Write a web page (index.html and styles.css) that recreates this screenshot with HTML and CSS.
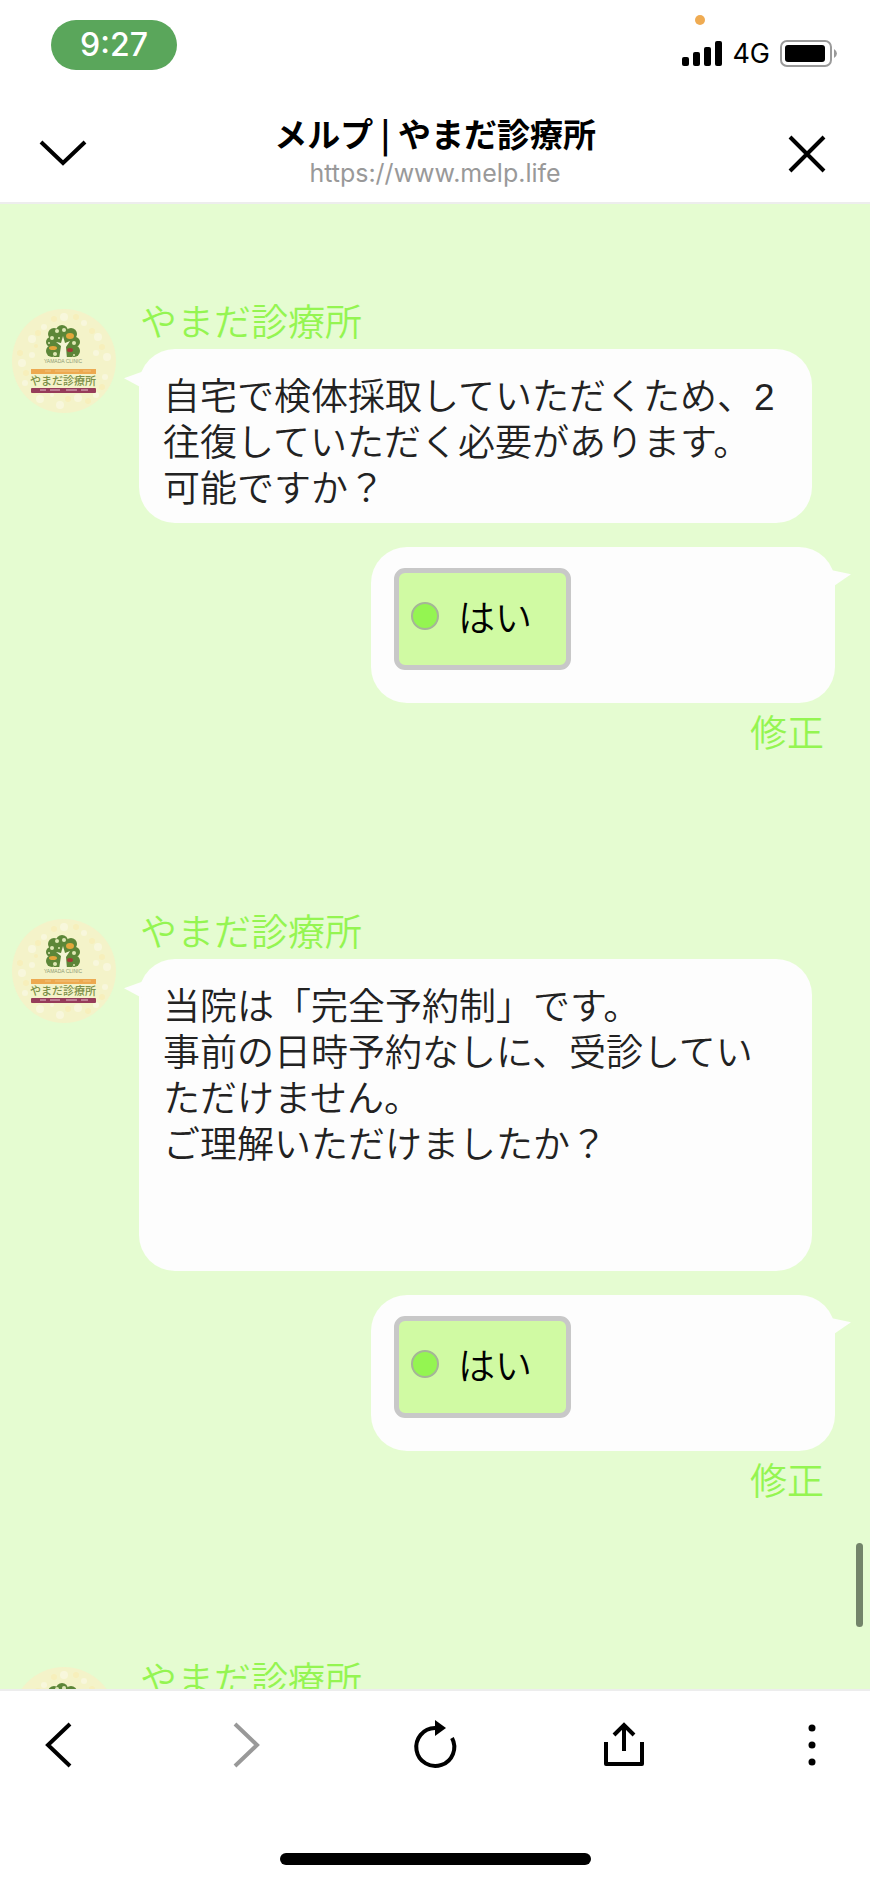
FILE: index.html
```html
<!DOCTYPE html>
<html lang="ja">
<head>
  <meta charset="UTF-8">
  <meta name="viewport" content="width=device-width, initial-scale=1">
  <title>メルプ | やまだ診療所</title>
  <link rel="stylesheet" href="styles.css">
</head>
<body>
  <!-- Clinic logo, shared by every message -->
  <svg class="sprite" aria-hidden="true">
    <symbol id="clinic-logo" viewBox="0 0 104 104">
      <circle cx="52" cy="52" r="52" fill="#f4f3c9"/>
      <g fill="#f8f7dc">
        <circle cx="20" cy="30" r="4"/><circle cx="32" cy="18" r="3"/><circle cx="52" cy="8" r="4"/><circle cx="72" cy="14" r="3"/>
        <circle cx="86" cy="28" r="4"/><circle cx="95" cy="48" r="4"/><circle cx="10" cy="54" r="4"/><circle cx="20" cy="46" r="3"/>
        <circle cx="84" cy="44" r="3"/><circle cx="13" cy="74" r="3"/><circle cx="28" cy="90" r="4"/><circle cx="48" cy="96" r="4"/>
        <circle cx="66" cy="89" r="4"/><circle cx="84" cy="86" r="3"/><circle cx="93" cy="68" r="3"/><circle cx="40" cy="86" r="2"/>
      </g>
      <g fill="#f7efbb">
        <circle cx="26" cy="24" r="3"/><circle cx="42" cy="10" r="3"/><circle cx="64" cy="8" r="3"/><circle cx="80" cy="22" r="3"/>
        <circle cx="90" cy="38" r="3"/><circle cx="8" cy="44" r="3"/><circle cx="14" cy="64" r="3"/><circle cx="22" cy="82" r="3"/>
        <circle cx="56" cy="90" r="3"/><circle cx="76" cy="92" r="3"/><circle cx="90" cy="78" r="3"/><circle cx="24" cy="37" r="2"/>
      </g>
      <g fill="#5c8638">
        <circle cx="50" cy="22" r="6"/><circle cx="42" cy="25" r="6"/><circle cx="59" cy="25" r="6"/><circle cx="39" cy="33" r="5"/>
        <circle cx="63" cy="33" r="5"/><circle cx="40" cy="42" r="6"/><circle cx="62" cy="42" r="6"/><circle cx="51" cy="30" r="6"/>
        <rect x="42" y="30" width="18" height="18"/>
      </g>
      <path d="M47 50 L49 37 L44 33 L49 34 L51 27 L53 34 L58 32 L54 38 L55 50 Z" fill="#f3f4d6"/>
      <g fill="#dfe8b6">
        <circle cx="45" cy="22" r="2"/><circle cx="52" cy="21" r="2"/><circle cx="40" cy="29" r="2"/><circle cx="62" cy="34" r="2"/>
        <circle cx="37" cy="34" r="1"/><circle cx="43" cy="45" r="2"/><circle cx="62" cy="46" r="1"/><circle cx="47" cy="29" r="1"/>
      </g>
      <ellipse cx="58" cy="27" rx="4" ry="3" fill="#e2a73c"/>
      <ellipse cx="41" cy="39" rx="4" ry="2" fill="#e2a73c"/>
      <ellipse cx="58" cy="41" rx="3" ry="2" fill="#a33a35"/>
      <text class="logo-sub" x="51" y="54" text-anchor="middle">YAMADA CLINIC</text>
      <rect x="19" y="60" width="65" height="5" fill="#eda950"/>
      <path d="M33 62 h6 M43 62 h24 M71 62 h8" stroke="#f2c47c" stroke-width="1"/>
      <text class="logo-name" x="51" y="76" text-anchor="middle">やまだ診療所</text>
      <rect x="19" y="79" width="65" height="5" rx="1" fill="#963c5a"/>
      <path d="M28 81 h6 M38 81 h10 M54 81 h11 M69 81 h7" stroke="#bd7d92" stroke-width="2"/>
    </symbol>
  </svg>

  <div class="app">
    <!-- Status bar -->
    <div class="status-bar">
      <span class="clock">9:27</span>
      <span class="mic-dot"></span>
      <div class="status-icons">
        <svg width="40" height="26" viewBox="0 0 40 26" aria-hidden="true">
          <rect x="0" y="16" width="7" height="9" rx="2"/>
          <rect x="11" y="11" width="7" height="14" rx="2"/>
          <rect x="22" y="6" width="7" height="19" rx="2"/>
          <rect x="33" y="0" width="7" height="25" rx="2"/>
        </svg>
        <span class="network">4G</span>
        <svg width="58" height="28" viewBox="0 0 58 28" aria-hidden="true">
          <rect x="1" y="1" width="50" height="25" rx="6" fill="none" stroke="#9a9a9a" stroke-width="2"/>
          <rect x="5" y="5" width="40" height="17" rx="3"/>
          <path d="M54 9 Q57 11 57 13.500 Q57 16 54 18 Z" fill="#9a9a9a"/>
        </svg>
      </div>
    </div>

    <!-- Browser header -->
    <header class="nav-bar">
      <button type="button" class="icon-btn" aria-label="最小化">
        <svg width="48" height="48" viewBox="0 0 48 48" class="icon"><path d="M2 14 L24 35 L46 14"/></svg>
      </button>
      <div class="page-info">
        <h1 class="page-title">メルプ | やまだ診療所</h1>
        <p class="page-url">https://www.melp.life</p>
      </div>
      <button type="button" class="icon-btn" aria-label="閉じる">
        <svg width="48" height="48" viewBox="0 0 48 48" class="icon"><path d="M7 9 L41 43 M41 9 L7 43"/></svg>
      </button>
    </header>

    <!-- Chat -->
    <main class="chat">
      <div class="chat-log">
        <section class="exchange">
          <div class="message">
            <svg class="avatar" role="img" aria-label="やまだ診療所"><use href="#clinic-logo"/></svg>
            <div class="message-body">
              <p class="sender">やまだ診療所</p>
              <p class="bubble bubble-left">自宅で検体採取していただくため、2往復していただく必要があります。<br>可能ですか？</p>
            </div>
          </div>
          <div class="reply">
            <div class="bubble-right">
              <label class="option"><input type="radio" name="visit" checked><span>はい</span></label>
            </div>
            <a href="#" class="edit">修正</a>
          </div>
        </section>

        <section class="exchange">
          <div class="message">
            <svg class="avatar" role="img" aria-label="やまだ診療所"><use href="#clinic-logo"/></svg>
            <div class="message-body">
              <p class="sender">やまだ診療所</p>
              <p class="bubble bubble-left">当院は「完全予約制」です。<br>事前の日時予約なしに、受診していただけません。<br>ご理解いただけましたか？<br><br><br></p>
            </div>
          </div>
          <div class="reply">
            <div class="bubble-right">
              <label class="option"><input type="radio" name="reservation" checked><span>はい</span></label>
            </div>
            <a href="#" class="edit">修正</a>
          </div>
        </section>

        <section class="exchange">
          <div class="message">
            <svg class="avatar" role="img" aria-label="やまだ診療所"><use href="#clinic-logo"/></svg>
            <div class="message-body">
              <p class="sender">やまだ診療所</p>
            </div>
          </div>
        </section>
      </div>
      <span class="scroll-thumb"></span>
    </main>

    <!-- Toolbar -->
    <footer class="bottom-bar">
      <nav class="toolbar">
        <button type="button" class="icon-btn" aria-label="戻る">
          <svg width="48" height="48" viewBox="0 0 48 48" class="icon"><path d="M36 3 L14 24 L36 45"/></svg>
        </button>
        <button type="button" class="icon-btn" aria-label="進む" disabled>
          <svg width="48" height="48" viewBox="0 0 48 48" class="icon"><path d="M12 3 L34 24 L12 45"/></svg>
        </button>
        <button type="button" class="icon-btn" aria-label="再読み込み">
          <svg width="48" height="48" viewBox="0 0 48 48" class="icon"><path d="M26 7 H24 A19 19 0 1 0 41 17"/><path class="solid" d="M24 -1 L35 7 L24 15 Z"/></svg>
        </button>
        <button type="button" class="icon-btn" aria-label="共有">
          <svg width="48" height="48" viewBox="0 0 48 48" class="icon"><path d="M6 21 V43 H42 V21" stroke-linejoin="round"/><path d="M24 30 V4 M14 14 L24 4 L34 14"/></svg>
        </button>
        <button type="button" class="icon-btn" aria-label="メニュー">
          <svg width="48" height="48" viewBox="0 0 48 48" class="icon"><g class="solid"><circle cx="24" cy="7" r="3.500"/><circle cx="24" cy="24" r="3.500"/><circle cx="24" cy="41" r="3.500"/></g></svg>
        </button>
      </nav>
      <div class="home-indicator"></div>
    </footer>
  </div>
</body>
</html>
```
FILE: styles.css
```css
* { box-sizing: border-box; }

body {
  margin: 0;
  font-family: "Liberation Sans", "Noto Sans CJK JP", sans-serif;
  background: #fff;
  color: #000;
}

h1, p { margin: 0; }

.sprite { display: none; }

.app {
  display: flex;
  flex-direction: column;
  height: 100vh;
}

/* Status bar */
.status-bar {
  position: relative;
  display: flex;
  justify-content: space-between;
  align-items: flex-start;
  height: 101px;
  padding: 20px 32px 0 51px;
  font-family: Inter, sans-serif;
}

.clock {
  width: 126px;
  line-height: 50px;
  border-radius: 25px;
  background: #5aa65b;
  color: #fff;
  font-size: 32px;
  font-weight: 500;
  text-align: center;
}

.mic-dot {
  position: absolute;
  top: 15px;
  right: 165px;
  width: 10px;
  height: 10px;
  border-radius: 50%;
  background: #efab52;
}

.status-icons {
  display: flex;
  align-items: center;
  gap: 10px;
  padding-top: 16px;
}

.network {
  font-size: 27px;
  line-height: 36px;
}

/* Browser header */
.nav-bar {
  display: flex;
  justify-content: space-between;
  height: 103px;
  padding: 0 33px;
  border-bottom: 2px solid #ededed;
}

.page-info { text-align: center; }

.page-title {
  font-family: "Noto Sans CJK JP", sans-serif;
  font-size: 33px;
  font-weight: 700;
  line-height: 48px;
  padding-top: 8px;
}

.page-url {
  font-family: Inter, sans-serif;
  font-size: 25px;
  line-height: 32px;
  color: #999;
}

.icon-btn {
  display: flex;
  justify-content: center;
  align-items: center;
  width: 60px;
  height: 102px;
  padding: 0;
  border: none;
  background: none;
  color: #000;
  cursor: pointer;
}

.icon-btn:disabled { color: #999; cursor: default; }

.icon {
  fill: none;
  stroke: currentColor;
  stroke-width: 4;
  overflow: visible;
}

.icon .solid { fill: currentColor; stroke: none; }

/* Chat */
.chat {
  position: relative;
  flex: 1;
  min-height: 0;
  background: #e5fcd1;
}

.chat-log {
  height: 100%;
  padding-top: 94px;
  overflow-y: auto;
  scrollbar-width: none;
}

.exchange { padding: 0 35px 150px 12px; }

.message {
  display: flex;
  gap: 23px;
  padding-right: 23px;
}

.avatar {
  flex: none;
  width: 104px;
  height: 104px;
  margin-top: 11px;
}

.logo-sub {
  font-family: "Liberation Sans", sans-serif;
  font-size: 5px;
  fill: #8d9a74;
}

.logo-name {
  font-family: "Noto Sans CJK JP", sans-serif;
  font-size: 11px;
  font-weight: 500;
  fill: #7c8f48;
}

.message-body { flex: 1; }

.sender {
  padding: 3px 0 2px 1px;
  font-size: 37px;
  font-weight: 350;
  line-height: 46px;
  color: #94f551;
}

.bubble {
  position: relative;
  padding: 26px 30px 10px 24px;
  border-radius: 36px;
  background: #fdfdfd;
  font-size: 37px;
  font-weight: 350;
  line-height: 46px;
  color: #222;
}

.bubble-left::before {
  content: "";
  position: absolute;
  top: 22px;
  left: -15px;
  width: 20px;
  height: 18px;
  background: #fdfdfd;
  clip-path: polygon(0 40%, 100% 0, 100% 100%);
}

.reply {
  display: flex;
  flex-direction: column;
  align-items: flex-end;
  padding-top: 24px;
}

.bubble-right {
  position: relative;
  width: 464px;
  max-width: 100%;
  padding: 21px 23px 33px;
  border-radius: 36px;
  background: #fdfdfd;
}

.bubble-right::after {
  content: "";
  position: absolute;
  top: 23px;
  right: -16px;
  width: 20px;
  height: 18px;
  background: #fdfdfd;
  clip-path: polygon(0 0, 100% 24%, 0 100%);
}

.option {
  display: inline-flex;
  align-items: center;
  gap: 19px;
  height: 102px;
  padding: 0 34px 6px 12px;
  border: 5px solid #c8c8c8;
  border-radius: 11px;
  background: #d0faa3;
  font-size: 37px;
  font-weight: 350;
  vertical-align: top;
  cursor: pointer;
}

.option input {
  appearance: none;
  width: 28px;
  height: 28px;
  margin: 0;
  border: 2px solid #a5b597;
  border-radius: 50%;
  background: #94f551;
}

.edit {
  margin: 9px 11px 0 0;
  font-size: 37px;
  font-weight: 350;
  line-height: 46px;
  color: #94f551;
  text-decoration: none;
}

.scroll-thumb {
  position: absolute;
  right: 7px;
  bottom: 62px;
  width: 7px;
  height: 84px;
  border-radius: 4px;
  background: #73846a;
}

/* Toolbar */
.bottom-bar {
  height: 195px;
  border-top: 2px solid #ededed;
}

.toolbar {
  display: flex;
  justify-content: space-between;
  height: 162px;
  padding: 3px 28px 0;
}

.home-indicator {
  width: 311px;
  height: 12px;
  margin: 0 auto;
  border-radius: 6px;
  background: #000;
}
```
